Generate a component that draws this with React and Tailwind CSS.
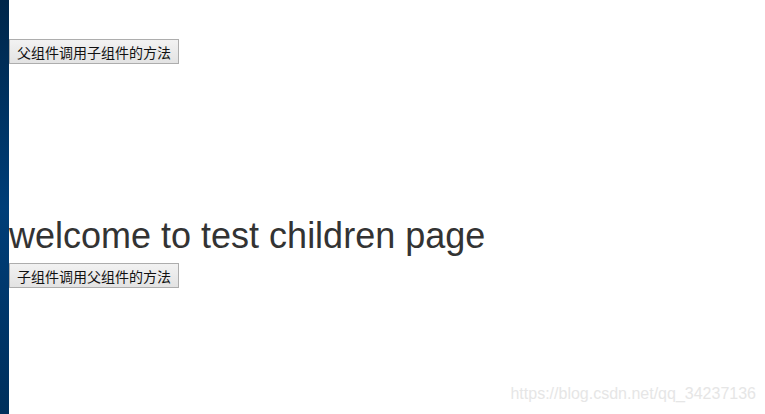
export default function App() {
  const btn =
    "h-[25px] w-[170px] border border-[#adadad] bg-gradient-to-b from-[#f2f2f2] to-[#e3e3e3] text-[14px] leading-none text-[#111] font-['Noto_Sans_CJK_SC',sans-serif] flex items-center justify-center"

  return (
    <div className="relative flex h-[414px] w-[765px] overflow-hidden bg-white">
      {/* left edge of desktop */}
      <div className="h-full w-[9px] bg-gradient-to-b from-[#00264a] via-[#003e78] to-[#002f5c]" />

      <div className="flex flex-col">
        <div className="mt-[39px]">
          <button className={btn}>父组件调用子组件的方法</button>
        </div>

        <h1 className="mt-[147px] text-[36px] leading-[50px] text-[#333] font-['Liberation_Sans',Arial,sans-serif]">
          welcome to test children page
        </h1>

        <div className="mt-[2px]">
          <button className={btn}>子组件调用父组件的方法</button>
        </div>
      </div>

      <div className="absolute bottom-[8px] right-[9px] text-[16px] text-[#e6e6e6] font-['Liberation_Sans',Arial,sans-serif]">
        https://blog.csdn.net/qq_34237136
      </div>
    </div>
  )
}
